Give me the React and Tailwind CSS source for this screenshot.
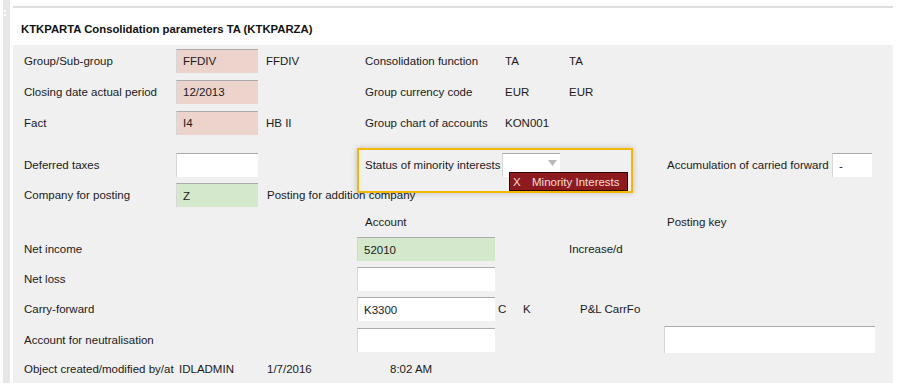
import React from "react";

const FONT = "font-['Liberation_Sans',Arial,sans-serif]";

function Box({ value, w = "w-[82px]", h = "h-[24px]", tone = "white" }) {
  const bg =
    tone === "pink" ? "bg-[#ecd3cc]" : tone === "green" ? "bg-[#d4e8cb]" : "bg-white";
  return (
    <div
      className={`${w} ${h} ${bg} shrink-0 border-t border-l border-t-[#ababab] border-l-[#d6d6d6] flex items-center pl-[6px]`}
    >
      {value}
    </div>
  );
}

export default function App() {
  return (
    <div className={`${FONT} w-[904px] h-[392px] bg-white flex text-[11.5px] text-[#1a1a1a] leading-[14px]`}>
      {/* left grip strip */}
      <div className="ml-[3px] w-[7px] h-[383px] bg-[#e7e7e7] flex flex-col items-start gap-[2px] pt-[10px] pl-[1px]">
        <span className="w-[2px] h-[2px] bg-white" />
        <span className="w-[2px] h-[2px] bg-white" />
      </div>

      <div className="ml-[3px] w-[880px] flex flex-col">
        <div className="mt-[6px] h-[2px] bg-[#dedede]" />
        <div className="h-[37px] pt-[15px] pl-[8px]">
          <h1 className="text-[11.3px] font-bold leading-[13px] text-[#111]">
            KTKPARTA Consolidation parameters TA (KTKPARZA)
          </h1>
        </div>

        <div className="h-[338px] bg-[#f0f0f0] pl-[11px] flex flex-col">
          <div className="h-[31px] flex items-center">
            <span className="w-[152px]">Group/Sub-group</span>
            <Box value="FFDIV" tone="pink" />
            <span className="ml-[8px] w-[99px]">FFDIV</span>
            <span className="w-[140px]">Consolidation function</span>
            <span className="w-[64px]">TA</span>
            <span>TA</span>
          </div>
          <div className="h-[31px] flex items-center">
            <span className="w-[152px]">Closing date actual period</span>
            <Box value="12/2013" tone="pink" />
            <span className="ml-[8px] w-[99px]"></span>
            <span className="w-[140px]">Group currency code</span>
            <span className="w-[64px]">EUR</span>
            <span>EUR</span>
          </div>
          <div className="h-[31px] flex items-center">
            <span className="w-[152px]">Fact</span>
            <Box value="I4" tone="pink" />
            <span className="ml-[8px] w-[99px]">HB II</span>
            <span className="w-[140px]">Group chart of accounts</span>
            <span>KON001</span>
          </div>

          <div className="mt-[12px] h-[30px] flex items-center">
            <span className="w-[152px]">Deferred taxes</span>
            <Box />
            <span className="w-[107px]" />
            <div className="relative flex items-center">
              <div className="absolute left-[-8px] top-[-5px] w-[276px] h-[45px] border-2 border-[#f6b700] shadow-[0_0_6px_rgba(0,0,0,0.22)] z-10 pointer-events-none" />
              <span className="w-[137px]">Status of minority interests</span>
              <div className="relative w-[58px] h-[24px] bg-white border-t border-l border-t-[#ababab] border-l-[#d6d6d6]">
                <svg className="absolute left-[45px] top-[6px]" width="9" height="6" viewBox="0 0 9 6">
                  <path d="M0 0 H9 L4.5 6 Z" fill="#b8b8b8" />
                </svg>
                <div className="absolute left-[6px] top-[18px] w-[119px] h-[19px] bg-[#8d1b1d] border border-[#2a0606] z-20 flex items-center text-[#f4dcdc] text-[11.5px]">
                  <span className="ml-[3px] w-[19px]">X</span>
                  <span>Minority Interests</span>
                </div>
              </div>
            </div>
            <span className="w-[107px]" />
            <span className="w-[165px]">Accumulation of carried forward</span>
            <Box value="-" w="w-[40px]" />
          </div>
          <div className="h-[30px] flex items-center">
            <span className="w-[152px]">Company for posting</span>
            <Box value="Z" tone="green" />
            <span className="ml-[9px]">Posting for addition company</span>
          </div>

          <div className="h-[24px] flex items-center">
            <span className="w-[341px]" />
            <span className="w-[302px]">Account</span>
            <span>Posting key</span>
          </div>
          <div className="h-[30px] flex items-center">
            <span className="w-[333px]">Net income</span>
            <Box value="52010" w="w-[138px]" tone="green" />
            <span className="ml-[74px]">Increase/d</span>
          </div>
          <div className="h-[30px] flex items-center">
            <span className="w-[333px]">Net loss</span>
            <Box w="w-[138px]" />
          </div>
          <div className="h-[30px] flex items-center">
            <span className="w-[333px]">Carry-forward</span>
            <Box value="K3300" w="w-[138px]" />
            <span className="ml-[3px] w-[25px]">C</span>
            <span className="w-[57px]">K</span>
            <span>P&amp;L CarrFo</span>
          </div>
          <div className="h-[31px] flex items-center">
            <span className="w-[333px]">Account for neutralisation</span>
            <Box w="w-[138px]" />
            <span className="w-[169px]" />
            <Box w="w-[211px]" h="h-[27px]" />
          </div>
          <div className="h-[28px] flex items-center">
            <span className="w-[155px]">Object created/modified by/at</span>
            <span className="w-[88px]">IDLADMIN</span>
            <span className="w-[123px]">1/7/2016</span>
            <span>8:02 AM</span>
          </div>
        </div>
      </div>
    </div>
  );
}
